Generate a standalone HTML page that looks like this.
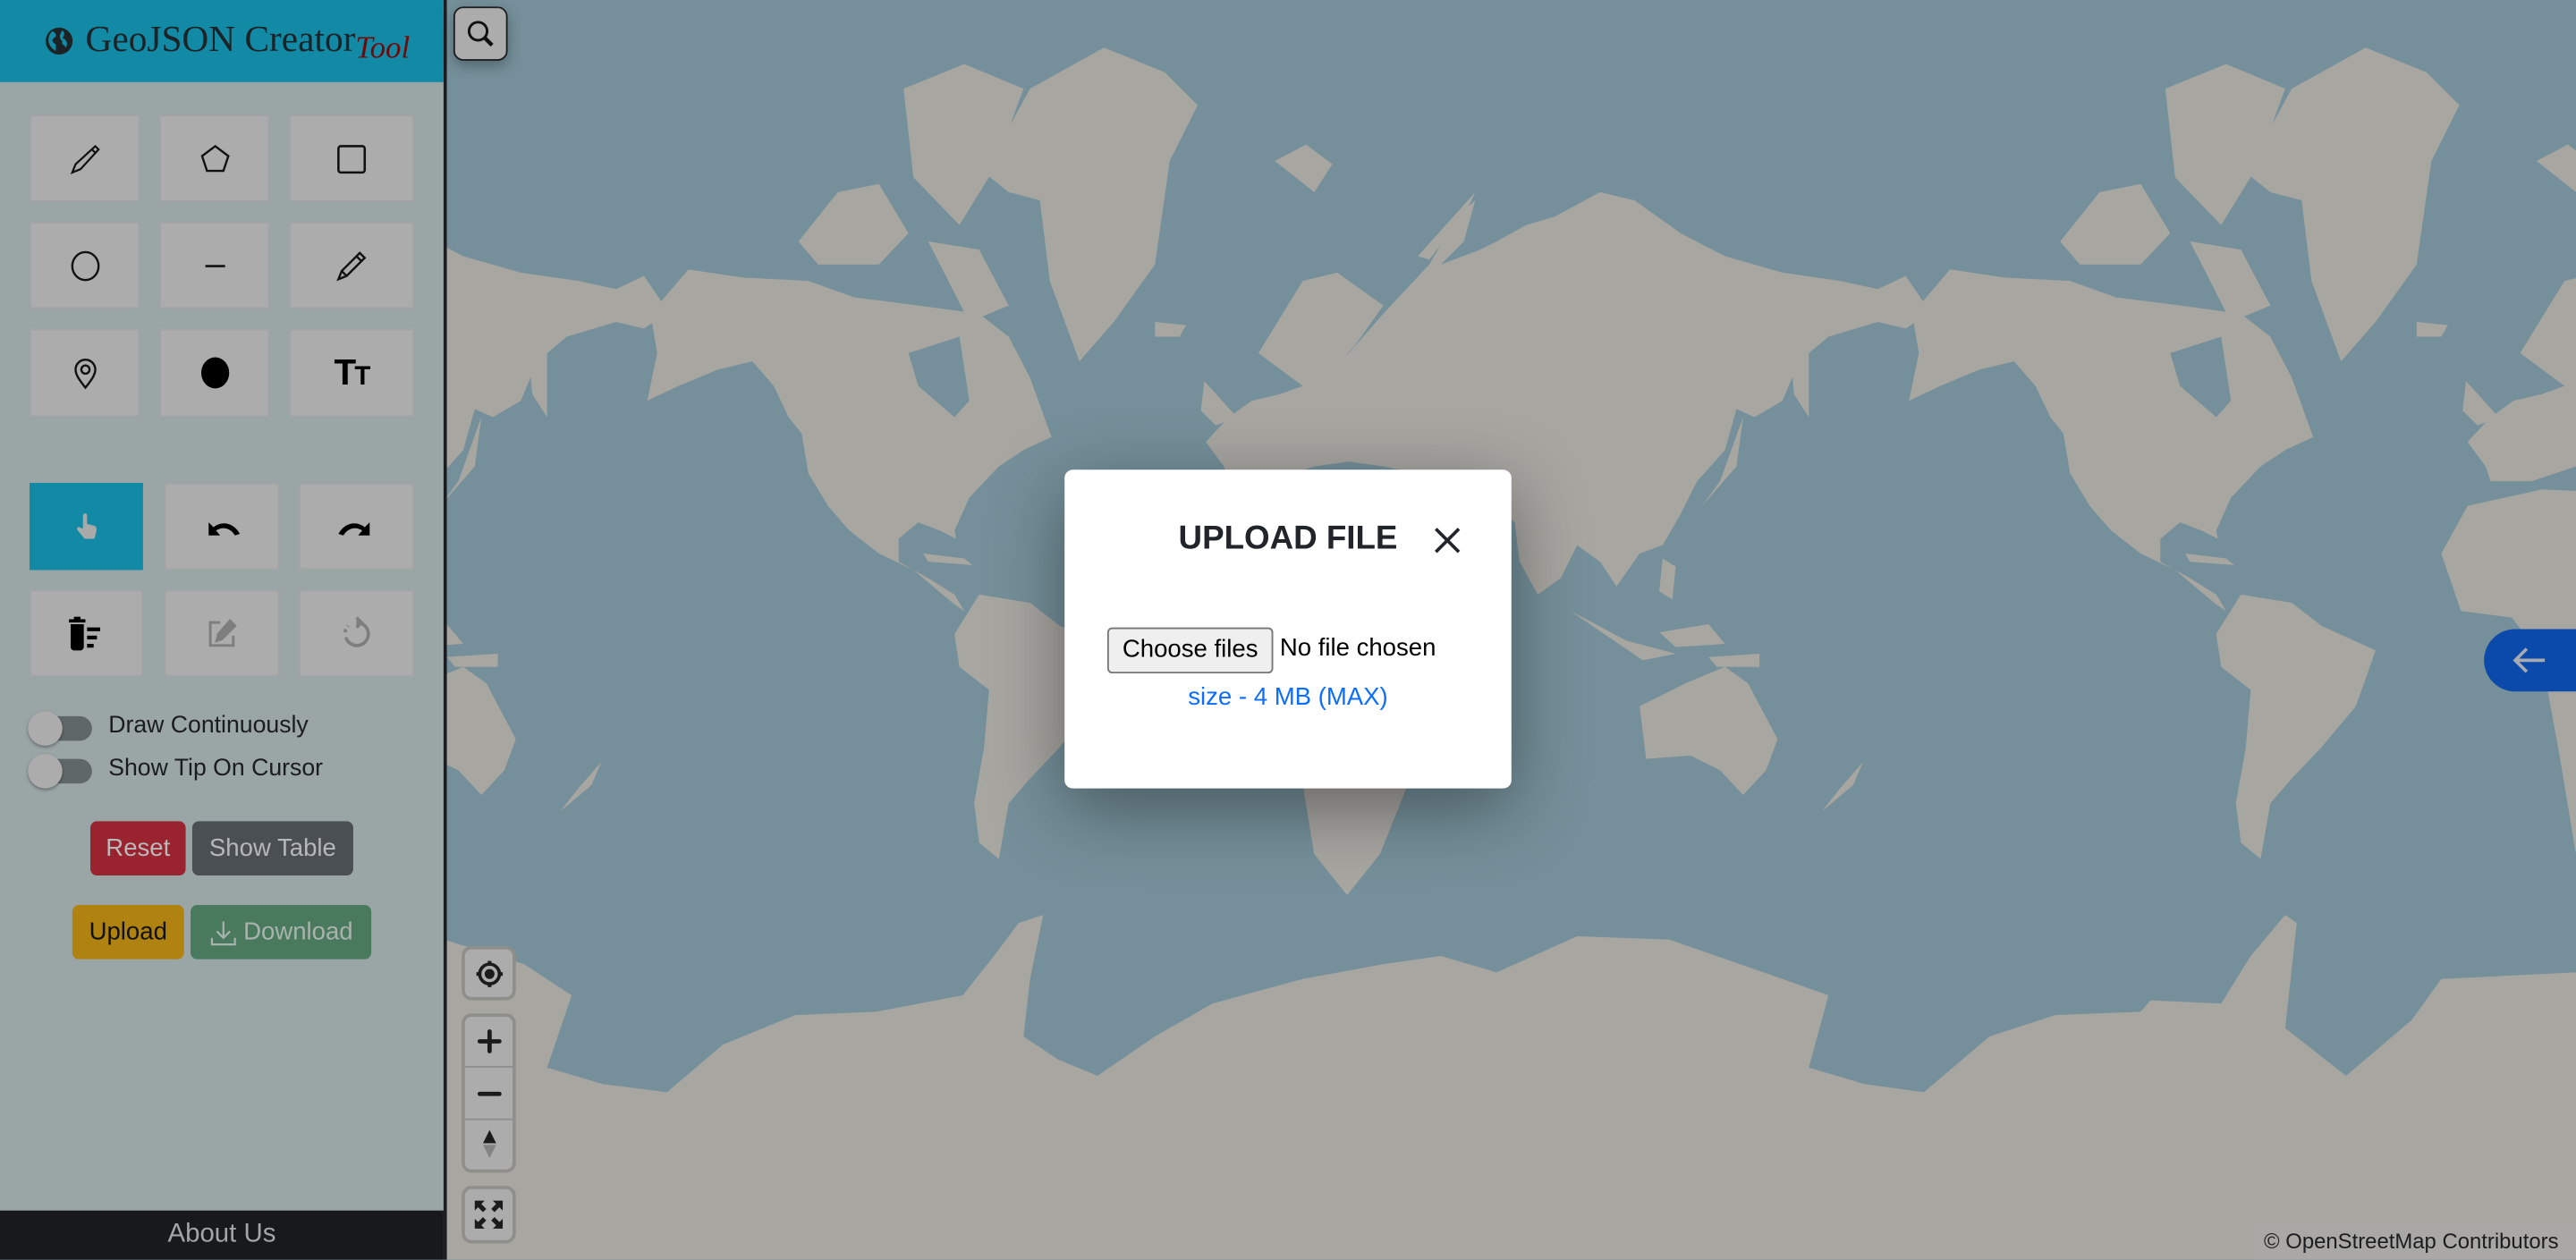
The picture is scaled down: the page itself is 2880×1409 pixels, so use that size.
<!DOCTYPE html>
<html><head><meta charset="utf-8">
<style>
html,body{margin:0;padding:0;width:2880px;height:1408px;overflow:hidden;background:#75909a;}
#w{position:absolute;left:0;top:0;width:1568px;height:767px;transform:scale(1.836735);transform-origin:0 0;font-family:"Liberation Sans",sans-serif;overflow:hidden;}
.abs{position:absolute;}
#side{left:0;top:0;width:270px;height:767px;background:#9aa5a6;border-right:2px solid #1b1d20;box-sizing:content-box;}
#hdr{left:0;top:0;width:270px;height:50px;background:#138aa5;}
.tb{position:absolute;background:#acacac;border:1px solid #a2a4a4;box-sizing:border-box;display:flex;align-items:center;justify-content:center;}
.tgl{position:absolute;left:18px;width:38px;height:15px;border-radius:8px;background:#5f6767;}
.tgl:before{content:"";position:absolute;left:-1px;top:-3px;width:21px;height:21px;border-radius:50%;background:#acacac;box-shadow:0 1px 2px rgba(0,0,0,.35);}
.lbl{position:absolute;left:66px;font-size:14.5px;color:#1a1c1e;}
.btn{position:absolute;border-radius:4px;font-size:15px;display:flex;align-items:center;justify-content:center;}
.mc{position:absolute;left:281px;width:33px;background:#acacac;border:2px solid #8e8e8a;border-radius:6px;box-sizing:border-box;}
</style></head><body><div id="w">
<svg class="abs" style="left:0;top:0" width="1568" height="767" viewBox="0 0 1568 767">
<defs><g id="world">
<g fill="#a8a6a1">
<path d="M1164,191 L1187,164 L1220,169 L1260,171 L1288,181 L1327,186 L1364,191 L1382,205 L1395,230 L1408,266 L1391,274 L1376,284 L1358,303 L1349,323 L1350,328 L1340,323 L1327,318 L1315,328 L1315,342 L1333,352 L1349,362 L1355,372 L1349,368 L1324,347 L1303,337 L1285,323 L1272,308 L1260,288 L1256,264 L1248,254 L1239,235 L1226,220 L1205,225 L1181,235 L1162,244 L1168,215 Z"/>
<path d="M1367,105 L1395,54 L1440,29 L1477,44 L1497,64 L1480,98 L1471,161 L1446,196 L1425,220 L1407,171 L1401,122 L1382,117 Z"/>
<path d="M1318,54 L1355,39 L1391,54 L1373,103 L1352,137 L1324,108 Z"/>
<path d="M1254,147 L1278,117 L1303,112 L1321,142 L1303,161 L1266,161 Z"/>
<path d="M1333,147 L1364,152 L1382,186 L1358,196 Z"/>
<path d="M1330,337 L1355,340 L1360,344 L1333,342 Z"/>
<path d="M1349,386 L1364,362 L1395,367 L1413,381 L1446,396 L1434,430 L1413,455 L1395,474 L1382,489 L1376,523 L1364,513 L1361,489 L1367,455 L1370,420 L1352,406 Z"/>
<path d="M718,337 L734,308 L779,298 L830,300 L860,320 L880,350 L905,380 L890,420 L860,470 L840,520 L820,545 L800,520 L790,460 L779,400 L761,376 L730,372 Z"/>
<path d="M745,284 L734,269 L748,254 L762,244 L779,240 L793,235 L821,215 L842,191 L870,161 L887,132 L898,122 L891,147 L877,161 L901,152 L911,147 L929,137 L946,132 L974,117 L995,122 L1023,142 L1050,156 L1085,166 L1120,171 L1143,176 L1160,168 L1175,190 L1160,200 L1143,196 L1113,205 L1095,220 L1085,244 L1068,254 L1057,249 L1050,274 L1033,293 L1023,313 L1012,332 L998,337 L984,357 L974,342 L960,332 L950,352 L936,362 L925,342 L922,318 L904,303 L884,293 L863,288 L842,284 L821,281 L800,284 L773,293 L748,293 Z"/>
<path d="M766,215 L793,171 L814,166 L842,186 L825,210 L807,230 L793,235 Z"/>
<path d="M1089,205 L1101,200 L1101,254 L1092,240 Z"/>
<path d="M1047,293 L1061,254 L1057,284 L1036,308 Z"/>
<path d="M956,372 L990,390 L1020,398 L1000,402 Z M1010,385 L1040,380 L1050,392 L1020,394 Z M1040,400 L1071,398 L1071,406 L1045,406 Z M1012,340 L1020,345 L1018,365 L1010,360 Z"/>
<path d="M998,430 L1026,416 L1050,406 L1064,416 L1082,450 L1075,469 L1061,484 L1047,469 L1029,460 L1002,462 Z"/>
<path d="M1109,494 L1120,480 L1134,464 L1128,478 Z"/>
<path d="M1471,196 L1490,198 L1486,205 L1471,205 Z"/>
<path d="M1501,232 L1521,254 L1508,259 L1499,250 Z"/>
<path d="M776,98 L795,88 L811,100 L800,117 Z"/>
<path d="M863,156 L898,117 L892,130 L870,158 Z"/>
</g>
<path fill="#75909a" d="M1321,215 L1352,205 L1358,244 L1349,254 L1327,235 Z"/>
</g></defs>
<rect width="1568" height="767" fill="#75909a"/>
<use href="#world" transform="translate(-768,0)"/>
<use href="#world"/>
<use href="#world" transform="translate(768,0)"/>
<path fill="#a8a6a1" d="M270,572 L319,587 L348,606 L333,650 L367,660 L406,665 L440,636 L484,618 L533,616 L586,606 L605,582 L620,562 L635,557 L627,596 L623,631 L644,645 L668,655 L703,631 L738,611 L793,596 L842,587 L877,582 L911,592 L960,570 L1016,572 L1085,596 L1113,606 L1101,650 L1135,660 L1171,665 L1211,631 L1251,618 L1303,616 L1309,609 L1352,611 L1370,582 L1391,557 L1398,562 L1391,626 L1428,655 L1468,621 L1486,596 L1568,592 L1568,767 L270,767 Z"/>
</svg>

<!-- sidebar -->
<div id="side" class="abs">
<div id="hdr" class="abs">
<svg class="abs" style="left:27px;top:16px" width="18" height="18" viewBox="0 0 18 18"><circle cx="9" cy="9" r="8.2" fill="#1b2326"/><path d="M5,3 C7,4 8,6 6,7 C4,8 5,10 7,11 L7,15 C5,14 3,12 2.5,9 C2.5,6 3.5,4 5,3Z M11,2.5 C13,4 12,6 11,7 C13,8 15,10 13,13 C12,11 10,11 11,9 C9,8 9,5 11,2.5Z" fill="#138aa5"/></svg>
<div class="abs" style="left:52px;top:11px;font-family:'Liberation Serif',serif;font-size:22.5px;color:#1b2326;white-space:nowrap;">GeoJSON Creator<span style="font-style:italic;color:#6e0a0a;font-size:19px;position:relative;top:4px;">Tool</span></div>
</div>

<div class="tb" style="left:18px;top:70px;width:67px;height:53px"><svg width="22" height="22" viewBox="0 0 22 22" fill="none" stroke="#111" stroke-width="1.2"><path d="M17,3 L19,5 L8,17 L3,19 L5,14 Z M15,5 L17,7"/></svg></div>
<div class="tb" style="left:97px;top:70px;width:67px;height:53px"><svg width="22" height="22" viewBox="0 0 22 22" fill="none" stroke="#111" stroke-width="1.3"><path d="M11,3 L19,9 L16,18 L6,18 L3,9 Z"/></svg></div>
<div class="tb" style="left:176px;top:70px;width:76px;height:53px"><svg width="22" height="22" viewBox="0 0 22 22" fill="none" stroke="#111" stroke-width="1.4"><rect x="3" y="3" width="16" height="16" rx="1.5"/></svg></div>

<div class="tb" style="left:18px;top:135px;width:67px;height:53px"><svg width="22" height="22" viewBox="0 0 22 22" fill="none" stroke="#111" stroke-width="1.3"><ellipse cx="11" cy="11" rx="8" ry="8.5"/></svg></div>
<div class="tb" style="left:97px;top:135px;width:67px;height:53px"><svg width="22" height="22" viewBox="0 0 22 22"><path d="M5,11 L17,11" stroke="#111" stroke-width="1.4"/></svg></div>
<div class="tb" style="left:176px;top:135px;width:76px;height:53px"><svg width="22" height="22" viewBox="0 0 22 22" fill="none" stroke="#111" stroke-width="1.3"><path d="M16,3 L19,6 L8,17 L3,19 L5,14 Z M5,14 L8,17 M14,5 L17,8"/></svg></div>

<div class="tb" style="left:18px;top:200px;width:67px;height:54px"><svg width="22" height="22" viewBox="0 0 22 22" fill="none" stroke="#111" stroke-width="1.3"><path d="M11,20 C7,15 5,12 5,9 A6,6 0 0 1 17,9 C17,12 15,15 11,20Z"/><circle cx="11" cy="9" r="2.5"/></svg></div>
<div class="tb" style="left:97px;top:200px;width:67px;height:54px"><svg width="22" height="22" viewBox="0 0 22 22"><ellipse cx="11" cy="11" rx="8.5" ry="9.5" fill="#000"/></svg></div>
<div class="tb" style="left:176px;top:200px;width:76px;height:54px"><div style="font-weight:bold;font-size:22px;color:#000;font-family:'Liberation Sans',sans-serif;letter-spacing:-1px">T<span style="font-size:16px">T</span></div></div>

<div class="tb" style="left:18px;top:294px;width:69px;height:53px;background:#138aa5;border-color:#138aa5"><svg width="22" height="22" viewBox="0 0 22 22"><path d="M9,3 C10,2 11,3 11,4 L11,9 L15,10 C17,10.5 17,12 16.5,14 L15.5,18 L9.5,18 L5,12.5 C4.5,11.5 5.5,10.5 6.5,11 L8.5,12 L8.5,4Z" fill="#a9a9a9"/></svg></div>
<div class="tb" style="left:100px;top:294px;width:70px;height:53px"><svg width="26" height="22" viewBox="0 0 26 22"><path d="M5,8 L5,16 L12,16 L9.5,13 C13,10.5 18,11 21,16 L24,15 C20,8 13,7 8,11 Z" fill="#000"/></svg></div>
<div class="tb" style="left:182px;top:294px;width:70px;height:53px"><svg width="26" height="22" viewBox="0 0 26 22"><path d="M21,8 L21,16 L14,16 L16.5,13 C13,10.5 8,11 5,16 L2,15 C6,8 13,7 18,11 Z" fill="#000"/></svg></div>

<div class="tb" style="left:18px;top:359px;width:69px;height:53px"><svg width="26" height="24" viewBox="0 0 26 24" fill="#000"><rect x="2" y="3" width="10" height="2"/><rect x="5" y="1.5" width="4" height="2"/><path d="M3,6 L11,6 L11,20 C11,21 10,22 9,22 L5,22 C4,22 3,21 3,20Z"/><rect x="13" y="8" width="8" height="2.3"/><rect x="13" y="13" width="6" height="2.3"/><rect x="13" y="18" width="4" height="2.3"/></svg></div>
<div class="tb" style="left:100px;top:359px;width:70px;height:53px"><svg width="22" height="22" viewBox="0 0 22 22" fill="none" stroke="#7e7e7e" stroke-width="1.6"><path d="M10,4 L4,4 L4,18 L18,18 L18,12"/><path d="M16,3 L19,6 L11,14 L8,15 L9,11Z" fill="#7e7e7e"/></svg></div>
<div class="tb" style="left:182px;top:359px;width:70px;height:53px"><svg width="22" height="22" viewBox="0 0 22 22" fill="none" stroke="#7e7e7e" stroke-width="2"><path d="M11,4 A7,7 0 1 1 4.5,13" /><path d="M4,10 A7,7 0 0 1 6,6" stroke-dasharray="2 2"/><path d="M11,1 L14,4 L11,7" fill="#7e7e7e"/></svg></div>

<div class="tgl" style="top:436px"></div><div class="lbl" style="top:434px">Draw Continuously</div>
<div class="tgl" style="top:462px"></div><div class="lbl" style="top:460px">Show Tip On Cursor</div>

<div class="btn" style="left:55px;top:500px;width:58px;height:33px;background:#9a2330;color:#b9b9b9">Reset</div>
<div class="btn" style="left:117px;top:500px;width:98px;height:33px;background:#4a4f53;color:#b5b8ba">Show Table</div>
<div class="btn" style="left:44px;top:551px;width:68px;height:33px;background:#b08310;color:#111">Upload</div>
<div class="btn" style="left:116px;top:551px;width:110px;height:33px;background:#4a7a5d;color:#a9b3ad"><svg width="18" height="18" viewBox="0 0 18 18" fill="none" stroke="#a9b3ad" stroke-width="1.2" style="margin-right:3px"><path d="M9,2 L9,12 M5,8 L9,12 L13,8 M2,12 L2,16 L16,16 L16,12"/></svg>Download</div>

<div class="abs" style="left:0;top:737px;width:270px;height:30px;background:#17191c;color:#a3a6a9;font-size:16px;text-align:center;line-height:30px">About Us</div>
</div>

<!-- search -->
<div class="abs" style="left:276px;top:4px;width:33px;height:33px;background:#acacac;border:1.5px solid #1b1d20;border-radius:6px;box-sizing:border-box;box-shadow:0 3px 8px rgba(0,0,0,.3)"><svg class="abs" style="left:6px;top:6px" width="20" height="20" viewBox="0 0 20 20" fill="none" stroke="#111" stroke-width="1.6"><circle cx="8" cy="8" r="5.5"/><path d="M12,12 L16.5,16.5" stroke-width="2.4"/></svg></div>

<!-- map controls -->
<div class="mc" style="top:576px;height:33px"><svg class="abs" style="left:5px;top:5px" width="20" height="20" viewBox="0 0 20 20"><circle cx="10" cy="10" r="6" fill="none" stroke="#1b1b1b" stroke-width="2"/><circle cx="10" cy="10" r="3" fill="#1b1b1b"/><path d="M10,2 L10,5 M10,15 L10,18 M2,10 L5,10 M15,10 L18,10" stroke="#1b1b1b" stroke-width="2.2"/></svg></div>
<div class="mc" style="top:617px;height:97px">
<svg class="abs" style="left:5px;top:4px" width="20" height="22" viewBox="0 0 20 22"><path d="M10,5 L10,17 M4,11 L16,11" stroke="#1b1b1b" stroke-width="2.6" stroke-linecap="round"/></svg>
<div class="abs" style="left:0;top:30px;width:29px;height:1px;background:#8e8e8a"></div>
<svg class="abs" style="left:5px;top:37px" width="20" height="20" viewBox="0 0 20 20"><path d="M4,10 L16,10" stroke="#1b1b1b" stroke-width="2.6" stroke-linecap="round"/></svg>
<div class="abs" style="left:0;top:62px;width:29px;height:1px;background:#8e8e8a"></div>
<svg class="abs" style="left:7px;top:67px" width="16" height="22" viewBox="0 0 16 22"><path d="M8,2 L12,10 L4,10Z" fill="#1b1b1b"/><path d="M4,11 L12,11 L8,19Z" fill="#838383"/></svg>
</div>
<div class="mc" style="top:722px;height:35px"><svg class="abs" style="left:4px;top:5px" width="21" height="21" viewBox="0 0 21 21" fill="#1b1b1b"><path d="M2,2 L8,2 L6,4 L9,7 L7,9 L4,6 L2,8Z M19,2 L13,2 L15,4 L12,7 L14,9 L17,6 L19,8Z M2,19 L8,19 L6,17 L9,14 L7,12 L4,15 L2,13Z M19,19 L13,19 L15,17 L12,14 L14,12 L17,15 L19,13Z"/></svg></div>

<!-- right arrow -->
<div class="abs" style="left:1512px;top:383px;width:60px;height:38px;background:#0b4aab;border-radius:19px 0 0 19px"><svg class="abs" style="left:17px;top:9px" width="22" height="20" viewBox="0 0 22 20" fill="none" stroke="#a6aab2" stroke-width="2"><path d="M2,10 L20,10 M9,3 L2,10 L9,17"/></svg></div>

<!-- attribution -->
<div class="abs" style="left:1372px;top:745px;width:196px;height:22px;background:#a9a8a4;border-top-left-radius:2px;font-size:13px;color:#1c1d20;line-height:22px;padding-left:6px;box-sizing:border-box;white-space:nowrap">© OpenStreetMap Contributors</div>

<!-- modal -->
<div class="abs" style="left:648px;top:286px;width:272px;height:194px;background:#fff;border-radius:5px;box-shadow:0 12px 45px rgba(0,0,0,.4)">
<div class="abs" style="left:0;top:31px;width:272px;text-align:center;font-weight:bold;font-size:20px;color:#212529">UPLOAD FILE</div>
<svg class="abs" style="left:223px;top:33px" width="20" height="20" viewBox="0 0 20 20"><path d="M3,3 L17,17 M17,3 L3,17" stroke="#212529" stroke-width="2"/></svg>
<div class="abs" style="left:26px;top:96px;width:101px;height:28px;background:#efefef;border:1px solid #767676;border-radius:3px;box-sizing:border-box;font-size:15px;line-height:26px;text-align:center;color:#000">Choose files</div>
<div class="abs" style="left:131px;top:100px;font-size:15px;color:#000">No file chosen</div>
<div class="abs" style="left:0;top:130px;width:272px;text-align:center;font-size:15px;color:#0d6efd">size - 4 MB (MAX)</div>
</div>
</div></body></html>
